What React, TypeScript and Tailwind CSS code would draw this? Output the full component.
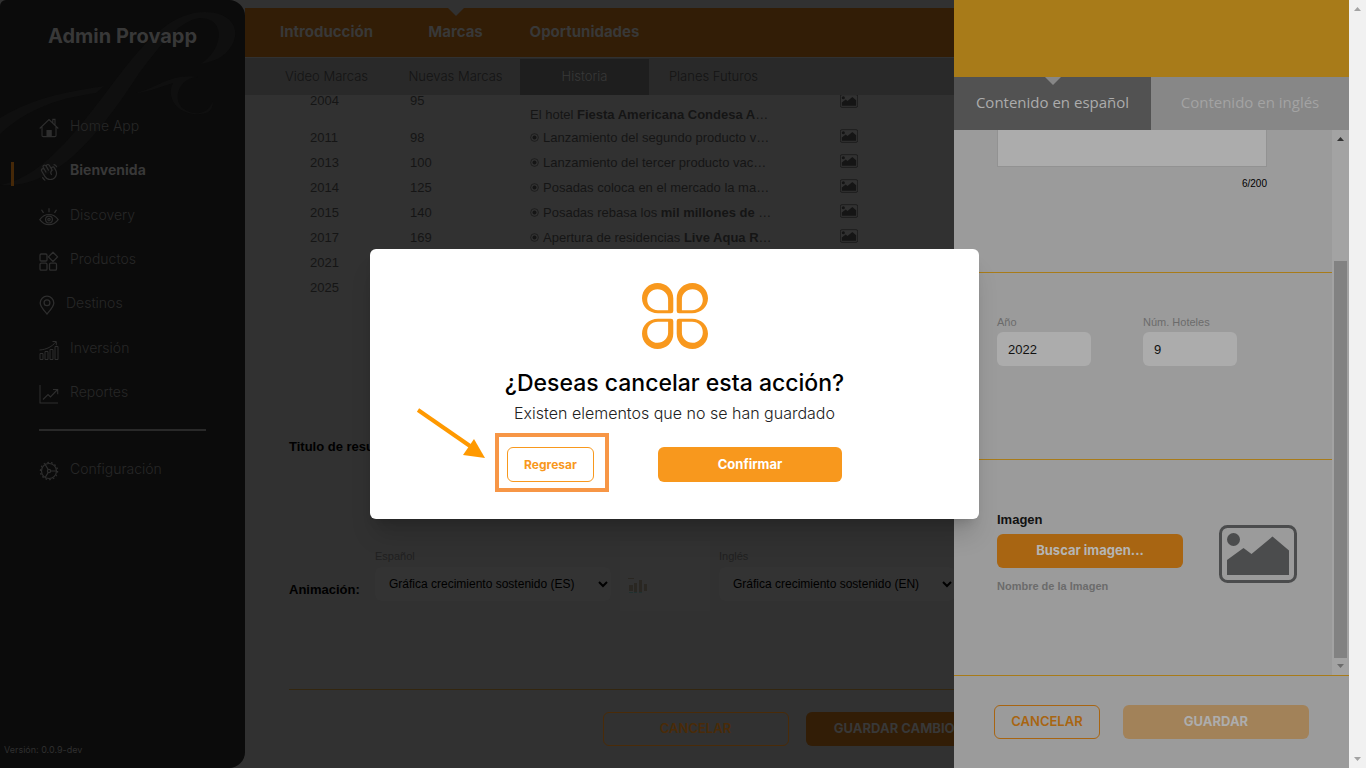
import React, { useState } from 'react';
import { PiHandWaving } from 'react-icons/pi';

type IconProps = { className?: string };

const HomeIcon = ({ className }: IconProps) => (
    <svg viewBox="0 0 20 20" className={className} fill="none" stroke="currentColor" strokeWidth="1.1">
        <path d="M.7 10.5 10 1.6l9.3 8.9M3 9v8.4q0 1.2 1.2 1.2h11.6q1.2 0 1.2-1.2V9M13.8 4.8V1.4H16v5.4" />
        <path d="M8 12.5h4.2v6H8z" fill="currentColor" />
    </svg>
);

const EyeIcon = ({ className }: IconProps) => (
    <svg viewBox="0 0 20 20" className={className} fill="none" stroke="currentColor" strokeWidth="1.2">
        <path d="M.8 12.6C3.4 9 6.6 7.5 10 7.5s6.6 1.5 9.2 5.1c-2.6 3.6-5.8 5.1-9.2 5.1S3.4 16.2.8 12.6z" />
        <circle cx="10" cy="12.6" r="3.4" />
        <circle cx="10" cy="12.6" r="1.2" />
        <path d="M10 1.2v4M2.5 2.7l2 3.2M17.5 2.7l-2 3.2" />
    </svg>
);

const ProductsIcon = ({ className }: IconProps) => (
    <svg viewBox="0 0 20 20" className={className} fill="none" stroke="currentColor" strokeWidth="1.3">
        <rect x="1" y="3" width="7" height="7" rx="1.2" />
        <rect x="1" y="12.2" width="7" height="7" rx="1.2" />
        <rect x="10.5" y="12.2" width="7" height="7" rx="1.2" />
        <path d="m14 1.3 4.6 4.6-4.6 4.6-4.6-4.6z" strokeLinejoin="round" />
    </svg>
);

const PinIcon = ({ className }: IconProps) => (
    <svg viewBox="0 0 16 20" className={className} fill="none" stroke="currentColor" strokeWidth="1.3">
        <path d="M8 19C4.5 15 1.2 11.5 1.2 8a6.8 6.8 0 0 1 13.600 0c0 3.500-3.300 7-6.800 11z" />
        <circle cx="8" cy="7.8" r="2.9" />
    </svg>
);

const GrowthIcon = ({ className }: IconProps) => (
    <svg viewBox="0 0 20 20" className={className} fill="none" stroke="currentColor" strokeWidth="1">
        <path d="M1 13.500h3v6H1zM6 11.500h3v8H6zM11 9.500h3v10h-3zM16 6.500h3v13h-3z" />
        <path d="M.5 10C8 9.500 13 6.500 16.800 2M13.500 1.500h3.800v3.800" />
    </svg>
);

const ReportIcon = ({ className }: IconProps) => (
    <svg viewBox="0 0 20 20" className={className} fill="none" stroke="currentColor" strokeWidth="1.1">
        <path d="M1 1v18h18M4 15.500l5-5 2.500 2.500 7-7.500M14 5.500h4.700v4.700" />
    </svg>
);

const GearIcon = ({ className }: IconProps) => (
    <svg viewBox="0 0 20 20" className={className} fill="none" stroke="currentColor" strokeWidth="1.2">
        <circle cx="10" cy="10" r="7.5" />
        <circle cx="10" cy="10" r="8.600" strokeDasharray="1.700 2.150" strokeWidth="1.200" />
        <circle cx="10" cy="10" r="1.600" />
        <path d="M11.600 10h5.900M9.200 8.600 6.200 3.500M9.200 11.400l-3 5.100" />
    </svg>
);

const ImageIcon = ({ className }: IconProps) => (
    <svg viewBox="0 0 78 58" className={className}>
        <rect x="1.500" y="1.500" width="75" height="55" rx="7" fill="none" stroke="currentColor" strokeWidth="3" />
        <circle cx="14.500" cy="14.500" r="6.500" fill="currentColor" />
        <path d="M8 35 24.500 23l8 6L53.500 11.500 70 25.500V50H8z" fill="currentColor" />
    </svg>
);

const Logo = ({ className }: IconProps) => (
    <svg viewBox="0 0 66 66" className={className} fill="#f8981d" fillRule="evenodd">
        {['', 'matrix(-1 0 0 1 66 0)', 'matrix(1 0 0 -1 0 66)', 'matrix(-1 0 0 -1 66 66)'].map(t => (
            <path
                key={t}
                transform={t}
                d="M15.500 0C7 0 0 6.800 0 15.200S7 30.200 16 30.200H29q2.300 0 2.300-2.300V15.500C31.300 6.500 24.500 0 15.500 0zM15.500 6.200c6 0 10.600 4.300 10.600 10.200V27.200H16C9.500 27.200 5.200 22.500 5.200 16.800 5.200 10.800 9.700 6.200 15.500 6.200z"
            />
        ))}
    </svg>
);

const Arrow = ({ up, className }: IconProps & { up?: boolean }) => (
    <svg viewBox="0 0 7 4" preserveAspectRatio="none" className={className} fill="currentColor">
        <path d={up ? 'M0 4 3.5 0 7 4z' : 'M0 0h7L3.5 4z'} />
    </svg>
);

const navItems = [
    { label: 'Home App', icon: HomeIcon },
    { label: 'Bienvenida', icon: PiHandWaving },
    { label: 'Discovery', icon: EyeIcon },
    { label: 'Productos', icon: ProductsIcon },
    { label: 'Destinos', icon: PinIcon },
    { label: 'Inversión', icon: GrowthIcon },
    { label: 'Reportes', icon: ReportIcon },
];

const history = [
    { year: '2011', hotels: '98', text: 'Lanzamiento del segundo producto v…' },
    { year: '2013', hotels: '100', text: 'Lanzamiento del tercer producto vac…' },
    { year: '2014', hotels: '125', text: 'Posadas coloca en el mercado la ma…' },
    { year: '2015', hotels: '140', text: 'Posadas rebasa los ', strong: 'mil millones de', end: ' …' },
    { year: '2017', hotels: '169', text: 'Apertura de residencias ', strong: 'Live Aqua R', end: '…' },
    { year: '2021', hotels: '', text: '' },
    { year: '2025', hotels: '', text: '' },
];

const Sidebar = () => (
    <aside className="relative flex w-[245px] shrink-0 flex-col overflow-hidden rounded-tl-md rounded-r-2xl bg-[#0b0b0b] font-[Inter,sans-serif] text-[#272727]">
        <svg viewBox="0 0 245 200" className="absolute top-0 left-0 w-full" fill="#0f0f0f">
            <path d="M0 185C45 178 85 120 120 74 150 35 175 12 205 12c27 0 36 18 27 33-7 13-20 17-32 19 22-12 28-46 0-46-20 2-40 27-60 54C105 125 60 190 0 185z" />
            <path d="M0 118c32-20 66-26 104-32l-8 7C60 98 28 108 0 134z" />
            <path d="M136 93c20-4 34-20 62-16-22 0-30 32-4 36 10 1 16-4 19-12 0 12-8 14-20 13-20-3-26-20-20-31-10 3-24 9-37 10z" />
        </svg>
        <h1 className="relative mt-6 text-center text-xl leading-6 font-bold text-[#383838]">Admin Provapp</h1>
        <nav className="relative mt-[66px] flex h-[290px] flex-col justify-between pl-[39px]">
            {navItems.map(({ label, icon: Icon }) => {
                const active = label === 'Bienvenida';
                return (
                    <a key={label} href="#" className={`relative flex items-center gap-[11px] text-sm leading-5 ${active ? 'font-bold text-[#383838]' : 'font-light'}`}>
                        {active && <span className="absolute top-1 -left-7 h-6 w-[3px] bg-[#452808]" />}
                        <Icon className={`mt-1 h-5 text-[#2e2e2e] ${label === 'Destinos' ? 'w-4' : 'w-5'}`} />
                        {label}
                    </a>
                );
            })}
        </nav>
        <hr className="relative mx-[39px] mt-[25px] border-t-2 border-[#292929]" />
        <a href="#" className="relative mt-[26px] ml-[39px] flex items-center gap-[11px] text-sm leading-5 font-light">
            <GearIcon className="mt-1 h-5 w-5 text-[#2e2e2e]" />
            Configuración
        </a>
        <p className="relative mt-auto mb-3 ml-1 text-[9px] leading-3 text-[#303030]">Versión: 0.0.9-dev</p>
    </aside>
);

const MainContent = () => (
    <main className="flex min-w-0 flex-1 flex-col font-['Liberation_Sans',Arial,sans-serif] text-[13px] text-[#151515]">
        <nav className="mt-2 flex h-[49px] bg-[#321d06] pl-[17px] font-[Inter,sans-serif] text-[15px] font-bold text-[#383838]">
            {['Introducción', 'Marcas', 'Oportunidades'].map(tab => (
                <a key={tab} href="#" className="relative flex w-[129px] items-center justify-center">
                    {tab === 'Marcas' && <Arrow className="absolute top-0 h-2 w-4 text-[#313131]" />}
                    {tab}
                </a>
            ))}
        </nav>
        <nav className="mt-px flex h-[37px] bg-[#292929] pt-px pl-[17px] font-[Inter,sans-serif] text-[13px] font-light text-[#141414]">
            {['Video Marcas', 'Nuevas Marcas', 'Historia', 'Planes Futuros'].map(tab => (
                <a key={tab} href="#" className={`flex w-[129px] items-center justify-center ${tab === 'Historia' ? 'bg-[#1e1e1e] text-[#383838]' : ''}`}>
                    {tab}
                </a>
            ))}
        </nav>

        <div className="flex h-[205px] flex-col justify-end overflow-hidden pl-[65px]">
            <table className="w-[580px] table-fixed text-left">
                <colgroup>
                    <col className="w-[100px]" />
                    <col className="w-[120px]" />
                    <col className="w-[310px]" />
                    <col />
                </colgroup>
                <tbody>
                    <tr className="h-12">
                        <td className="leading-[10px]">2004</td>
                        <td className="leading-[10px]">95</td>
                        <td className="pt-7">El hotel <b>Fiesta Americana Condesa A</b>…</td>
                        <td><ImageIcon className="h-[14px] w-[18px]" /></td>
                    </tr>
                    {history.map(row => (
                        <tr key={row.year} className="h-[25px]">
                            <td>{row.year}</td>
                            <td>{row.hotels}</td>
                            <td className="whitespace-nowrap">
                                {row.text && (
                                    <span className="flex items-center whitespace-pre">
                                        <svg viewBox="0 0 10 10" className="mr-1 h-[9px] w-[9px]">
                                            <circle cx="5" cy="5" r="4.3" fill="none" stroke="currentColor" strokeWidth=".7" />
                                            <circle cx="5" cy="5" r="2.2" fill="currentColor" />
                                        </svg>
                                        {row.text}<b>{row.strong}</b>{row.end}
                                    </span>
                                )}
                            </td>
                            <td className="pb-1">{row.text && <ImageIcon className="h-[14px] w-[18px]" />}</td>
                        </tr>
                    ))}
                </tbody>
            </table>
        </div>

        <h2 className="mt-[137px] ml-11 leading-5 font-bold text-black">Titulo de resultados:</h2>

        <div className="mt-[84px] ml-11 flex h-[70px] items-end">
            <b className="mb-[11px] w-[86px] leading-5 text-black">Animación:</b>
            <div className="mb-[10px] flex w-[236px] flex-col">
                <label htmlFor="anim-es" className="text-[11px] leading-[22px] text-[#202020]">Español</label>
                <select id="anim-es" className="h-[34px] rounded-md bg-[#333333] pl-[10px] text-xs text-black">
                    <option>Gráfica crecimiento sostenido (ES)</option>
                </select>
            </div>
            <div className="mx-[9px] flex h-[70px] w-[90px] items-center bg-[#323232] pt-5 pl-2">
                <svg viewBox="0 0 20 18" className="h-[18px] w-5">
                    <path d="M0 1h6v1H0zM1 8h4v6H1zM6 6h3v9H6zM11 3h3v12h-3zM16 7h3v7h-3z" fill="#2a2722" />
                    <path d="M1 15h4v1H1zM6 15h3v1H6zM11 15h3v1h-3z" fill="#20302f" />
                </svg>
            </div>
            <div className="mb-[10px] flex w-[236px] flex-col">
                <label htmlFor="anim-en" className="text-[11px] leading-[22px] text-[#202020]">Inglés</label>
                <select id="anim-en" className="h-[34px] rounded-md bg-[#333333] pl-[10px] text-xs text-black">
                    <option>Gráfica crecimiento sostenido (EN)</option>
                </select>
            </div>
        </div>

        <footer className="mx-11 mt-[78px] flex justify-center gap-[17px] border-t border-[#33260f] pt-[22px] font-[Inter,sans-serif] text-[13px] font-semibold">
            <button className="h-[34px] w-[186px] rounded-md border border-[#4a2b08] text-[#4a2b08]">CANCELAR</button>
            <button className="h-[34px] w-[186px] rounded-md bg-[#321d06] font-bold text-[#383838]">GUARDAR CAMBIOS</button>
        </footer>
    </main>
);

const Drawer = () => {
    const [year, setYear] = useState('2022');
    const [hotels, setHotels] = useState('9');

    return (
        <section className="absolute inset-y-0 right-0 flex w-[395px] flex-col bg-[#9b9b9b] font-['Liberation_Sans',Arial,sans-serif] text-[13px]">
            <div className="h-[77px] bg-[#a87b19]" />
            <div className="flex h-[53px] font-['Open_Sans',sans-serif] text-[15px]">
                <button className="relative w-[197px] bg-[#525252] pb-[2px] text-[#acacac]">
                    <Arrow className="absolute top-0 left-1/2 h-2 w-4 -translate-x-1/2 text-[#878787]" />
                    Contenido en español
                </button>
                <button className="flex-1 bg-[#878787] pb-[2px] text-[#a3a3a3]">Contenido en inglés</button>
            </div>
            <div className="flex h-[545px] overflow-hidden">
                <div className="flex flex-1 flex-col justify-end">
                    <div className="flex shrink-0 flex-col border-b border-[#a87b19] pr-[65px] pb-[81px] pl-[43px]">
                        <textarea aria-label="Descripción" className="h-24 resize-none border border-[#929292] bg-[#acacac]" />
                        <span className="mt-[10px] text-right text-[10px] leading-[14px] text-black">6/200</span>
                    </div>
                    <div className="flex h-[187px] shrink-0 gap-[52px] border-b border-[#a87b19] pt-[39px] pl-[43px]">
                        <div className="flex w-[94px] flex-col">
                            <label htmlFor="year" className="text-[11px] leading-5 text-[#6b6b6b]">Año</label>
                            <input id="year" value={year} onChange={e => setYear(e.target.value)} className="h-[34px] rounded-md bg-[#acacac] pl-[11px] text-[#111]" />
                        </div>
                        <div className="flex w-[94px] flex-col">
                            <label htmlFor="hotels" className="text-[11px] leading-5 text-[#6b6b6b]">Núm. Hoteles</label>
                            <input id="hotels" value={hotels} onChange={e => setHotels(e.target.value)} className="h-[34px] rounded-md bg-[#acacac] pl-[11px] text-[#111]" />
                        </div>
                    </div>
                    <div className="flex h-[215px] shrink-0 gap-9 pt-[50px] pl-[43px]">
                        <div className="flex w-[186px] flex-col">
                            <b className="mb-1 leading-5 text-[#111]">Imagen</b>
                            <button className="h-[34px] rounded-md bg-[#a86512] font-[Inter,sans-serif] font-bold text-[#b5b5b5]">Buscar imagen...</button>
                            <b className="mt-2 text-[11px] leading-5 text-[#6b6b6b]">Nombre de la Imagen</b>
                        </div>
                        <ImageIcon className="mt-[15px] h-[58px] w-[78px] text-[#4b4c4d]" />
                    </div>
                </div>
                <div className="flex w-[17px] flex-col items-center bg-[#a3a3a3]">
                    <Arrow up className="mt-[7px] h-1 w-[7px] text-[#333]" />
                    <div className="mt-auto h-[397px] w-[13px] bg-[#828282]" />
                    <Arrow className="mt-[6px] mb-[7px] h-1 w-[7px] text-[#6b6b6b]" />
                </div>
            </div>
            <footer className="flex gap-[23px] border-t border-[#a87b19] pt-[29px] pl-10 font-[Inter,sans-serif] text-[13px]">
                <button className="h-[34px] w-[106px] rounded-md border border-[#a86512] font-semibold text-[#a86512]">CANCELAR</button>
                <button className="h-[34px] w-[186px] rounded-md bg-[#a28259] font-bold text-[#adadad]">GUARDAR</button>
            </footer>
        </section>
    );
};

const CancelDialog = () => (
    <div className="absolute inset-0 flex items-center justify-center">
        <div role="dialog" aria-labelledby="dialog-title" className="flex h-[270px] w-[609px] flex-col items-center rounded-md bg-white pt-[34px] font-[Inter,sans-serif] shadow-xl shadow-black/15">
            <Logo className="h-[66px] w-[66px]" />
            <h2 id="dialog-title" className="mt-5 text-[23px] leading-7 font-medium text-black">¿Deseas cancelar esta acción?</h2>
            <p className="mt-1 text-base leading-6 font-light text-[#222]">Existen elementos que no se han guardado</p>
            <div className="mt-[22px] flex w-[335px] justify-between text-[13px] font-bold">
                <div className="relative">
                    <button className="h-[35px] w-[87px] rounded-md border border-[#f8981d] text-xs text-[#f8981d]">Regresar</button>
                    <span className="pointer-events-none absolute -top-[14px] -right-[15px] -bottom-[10px] -left-3 border-4 border-[#f79646]" />
                    <svg viewBox="0 0 70 52" className="pointer-events-none absolute -top-10 -left-[91px] h-[52px] w-[70px]">
                        <path d="M2 3 54 39" stroke="#ff9900" strokeWidth="4" />
                        <path d="M69 51 47 48 58 32z" fill="#ff9900" />
                    </svg>
                </div>
                <button className="h-[35px] w-[184px] rounded-md bg-[#f8981d] text-white">Confirmar</button>
            </div>
        </div>
    </div>
);

export default function App() {
    return (
        <div className="flex h-screen overflow-hidden bg-[#313131]">
            <div className="relative flex min-w-0 flex-1 overflow-hidden">
                <Sidebar />
                <MainContent />
                <Drawer />
                <CancelDialog />
            </div>
            <div className="flex w-[17px] shrink-0 flex-col items-center justify-between bg-[#f1f1f1] py-[7px] text-[#a3a3a3]">
                <Arrow up className="h-1 w-[7px]" />
                <Arrow className="h-1 w-[7px]" />
            </div>
        </div>
    );
}
